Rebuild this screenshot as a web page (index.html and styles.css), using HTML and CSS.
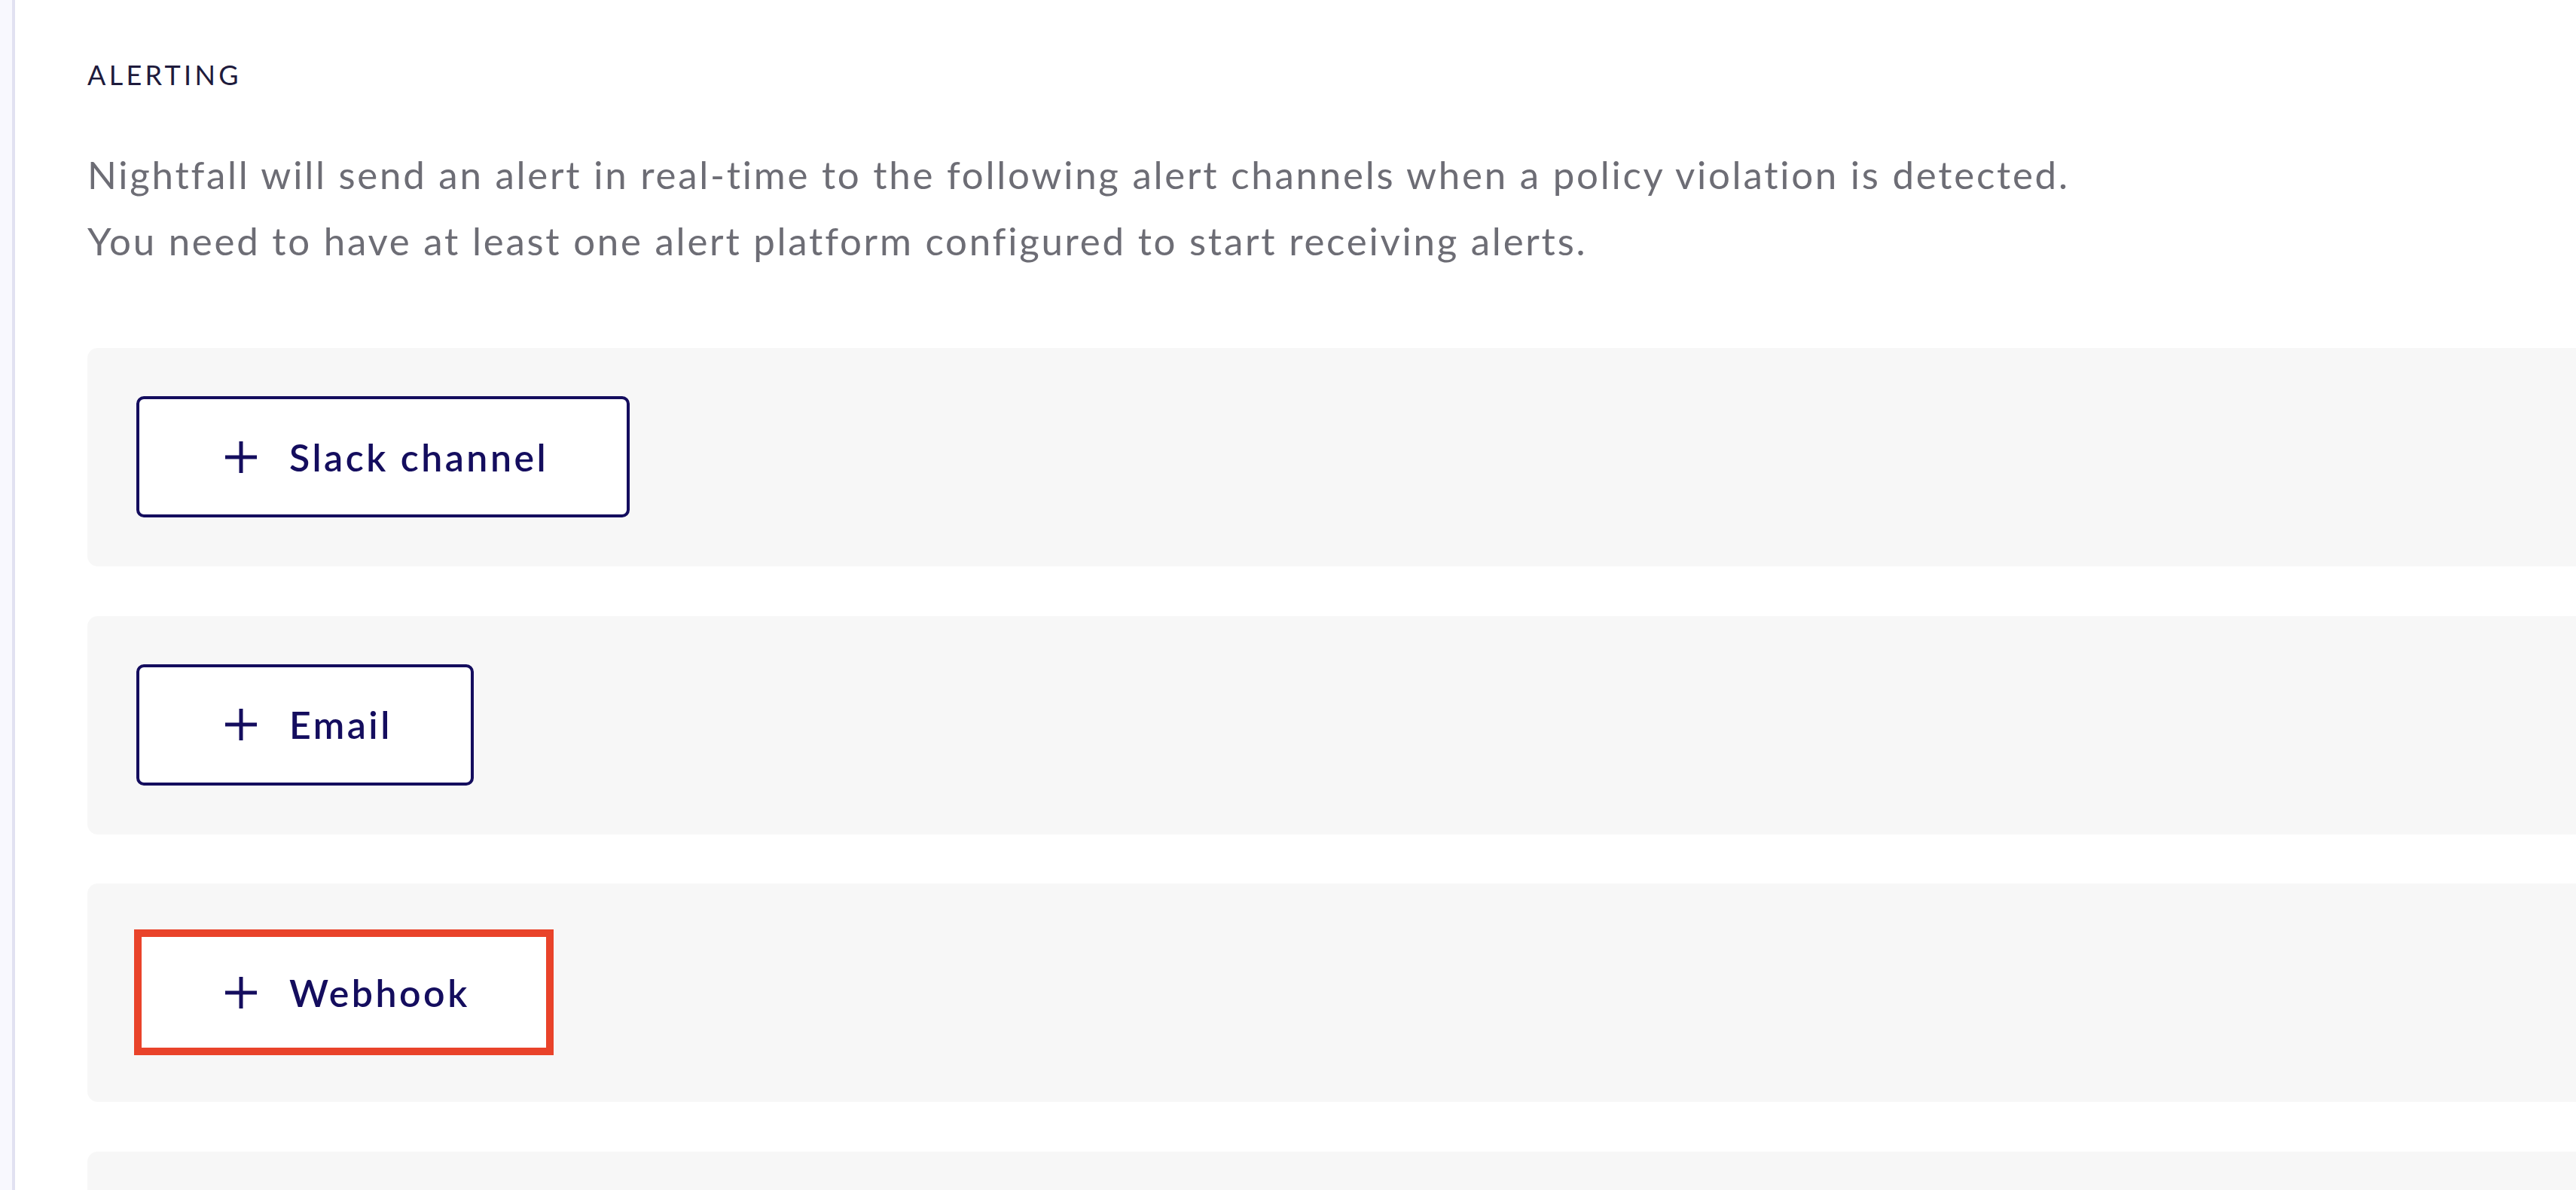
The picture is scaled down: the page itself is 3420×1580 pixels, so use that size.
FILE: index.html
```html
<!DOCTYPE html>
<html lang="en">
<head>
<meta charset="utf-8">
<title>Alerting</title>
<link rel="stylesheet" href="styles.css">
</head>
<body>
<div class="page">
  <div class="rail"></div>
  <main class="content">
    <h2 class="section-title">ALERTING</h2>
    <p class="lead">Nightfall will send an alert in real-time to the following alert channels when a policy violation is detected.<br>You need to have at least one alert platform configured to start receiving alerts.</p>
    <div class="panels">
      <section class="panel">
        <button class="add-btn" type="button">
          <svg class="plus" viewBox="0 0 44 44" width="44" height="44"><path d="M22 1v42M1 22h42" stroke="#140d5e" stroke-width="5" fill="none"/></svg>
          <span class="label">Slack channel</span>
        </button>
      </section>
      <section class="panel">
        <button class="add-btn" type="button">
          <svg class="plus" viewBox="0 0 44 44" width="44" height="44"><path d="M22 1v42M1 22h42" stroke="#140d5e" stroke-width="5" fill="none"/></svg>
          <span class="label">Email</span>
        </button>
      </section>
      <section class="panel">
        <div class="highlight">
          <button class="add-btn" type="button">
            <svg class="plus" viewBox="0 0 44 44" width="44" height="44"><path d="M22 1v42M1 22h42" stroke="#140d5e" stroke-width="5" fill="none"/></svg>
            <span class="label">Webhook</span>
          </button>
        </div>
      </section>
      <section class="panel"></section>
    </div>
  </main>
</div>
</body>
</html>
```

FILE: styles.css
```css
* { box-sizing: border-box; }
html, body {
  margin: 0;
  padding: 0;
  background: #ffffff;
  overflow: hidden;
}
body {
  font-family: Lato, "Liberation Sans", sans-serif;
}
.page {
  display: flex;
  min-height: 1580px;
}
.rail {
  width: 20px;
  flex: 0 0 20px;
  background: #f8f8fe;
  border-right: 4px solid #e1e1f1;
}
.content {
  flex: 1;
  padding: 81px 0 0 96px;
}
.section-title {
  margin: 0;
  font-size: 36px;
  line-height: 36px;
  font-weight: 400;
  letter-spacing: 4.3px;
  color: #1e1b3c;
}
.lead {
  margin: 71px 0 0 0;
  font-size: 51px;
  line-height: 88px;
  font-weight: 400;
  letter-spacing: 2.75px;
  color: #6d6d75;
}
.panels {
  margin-top: 98px;
  display: flex;
  flex-direction: column;
  gap: 65.5px;
}
.panel {
  background: #f7f7f7;
  border-radius: 14px 0 0 14px;
  padding: 64px 65px;
  height: 290px;
  display: flex;
  align-items: flex-start;
}
.add-btn {
  display: flex;
  align-items: center;
  gap: 42px;
  height: 161px;
  padding: 0 104px 0 113px;
  background: #ffffff;
  border: 4px solid #140d5e;
  border-radius: 10px;
  font-family: Lato, "Liberation Sans", sans-serif;
  font-size: 50px;
  font-weight: 600;
  letter-spacing: 3.5px;
  color: #140d5e;
  cursor: pointer;
}
.plus { display: block; flex: 0 0 44px; }
.label { display: block; line-height: 1; }
.highlight {
  position: relative;
  display: flex;
}
.highlight::after {
  content: "";
  position: absolute;
  inset: -3px;
  border: 10px solid #e9432a;
  pointer-events: none;
}
```
